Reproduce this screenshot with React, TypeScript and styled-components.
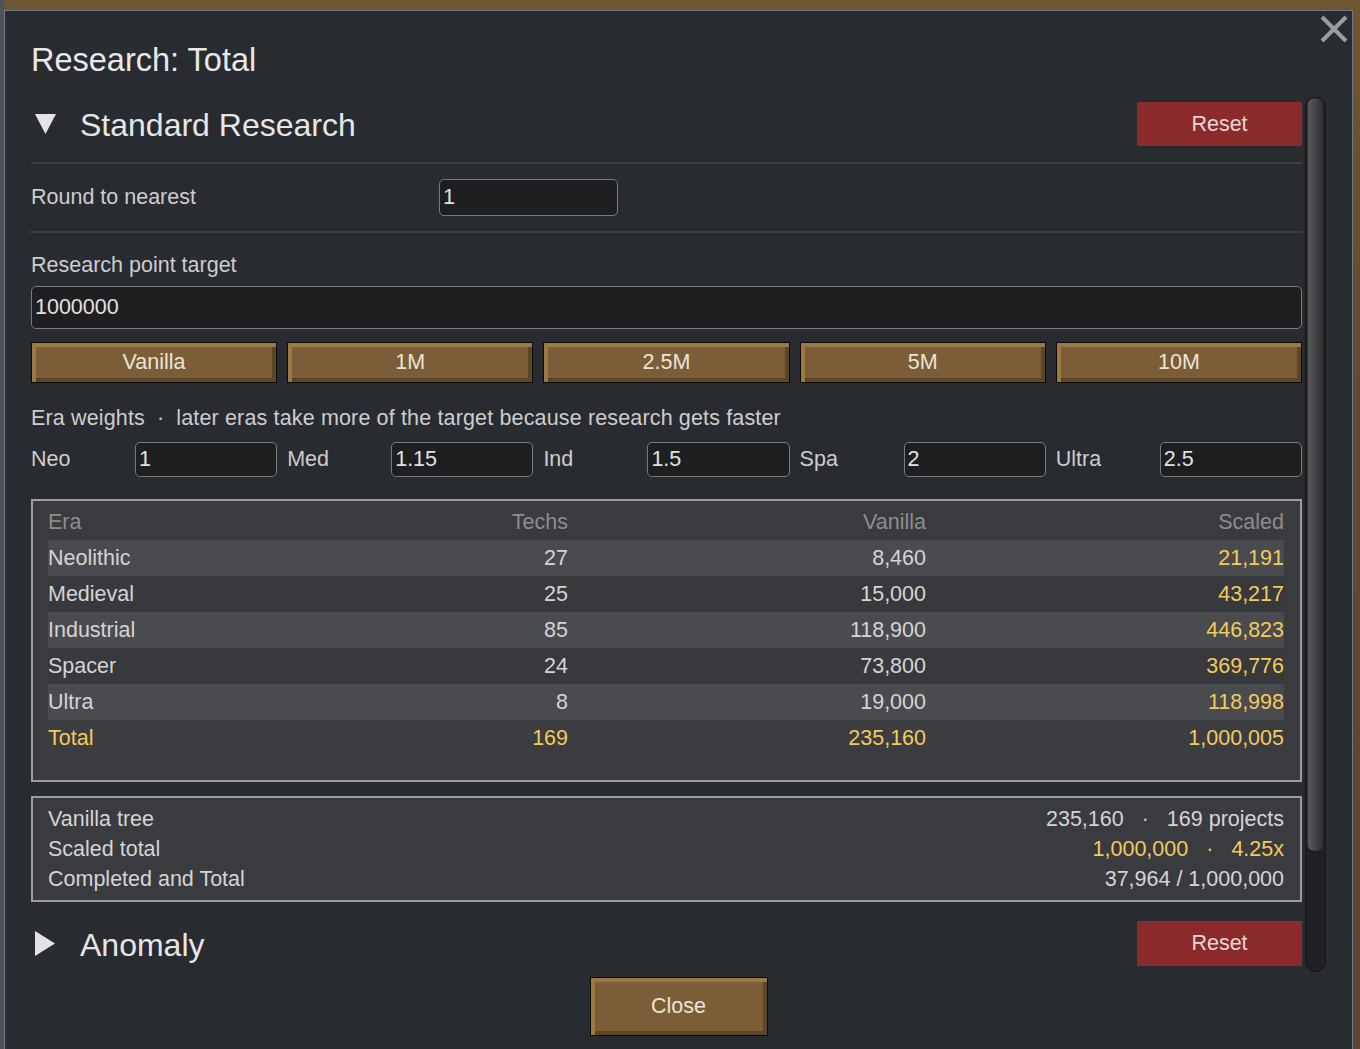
import styled, { createGlobalStyle } from "styled-components"

const GlobalStyle = createGlobalStyle`
  html, body {
    margin: 0;
    padding: 0;
    height: 100%;
    overflow: hidden;
  }
  body {
    font-family: "Liberation Sans", Arial, sans-serif;
    background:
      linear-gradient(90deg, #4e5158 0px, #4e5158 4px, transparent 4px),
      linear-gradient(180deg, #6e5634 0%, #5f4a32 40%, #5a4533 100%);
  }
`

const YELLOW = "#f2ca5c"

const eras = [
  { name: "Neolithic", techs: "27", vanilla: "8,460", scaled: "21,191" },
  { name: "Medieval", techs: "25", vanilla: "15,000", scaled: "43,217" },
  { name: "Industrial", techs: "85", vanilla: "118,900", scaled: "446,823" },
  { name: "Spacer", techs: "24", vanilla: "73,800", scaled: "369,776" },
  { name: "Ultra", techs: "8", vanilla: "19,000", scaled: "118,998" },
]

const weights = [
  { label: "Neo", value: "1" },
  { label: "Med", value: "1.15" },
  { label: "Ind", value: "1.5" },
  { label: "Spa", value: "2" },
  { label: "Ultra", value: "2.5" },
]

const presets = ["Vanilla", "1M", "2.5M", "5M", "10M"]

const DownTriangle = () => (
  <svg width="21" height="20" viewBox="0 0 21 20">
    <polygon points="0,0 21,0 10.5,20" fill="#e4e4e4" />
  </svg>
)

const RightTriangle = () => (
  <svg width="20" height="25" viewBox="0 0 20 25">
    <polygon points="0,0 20,12.5 0,25" fill="#e4e4e4" />
  </svg>
)

export default function App() {
  return (
    <>
      <GlobalStyle />
      <Page>
        <Dialog>
          <CloseX aria-label="close">
            <svg width="28" height="28" viewBox="0 0 28 28">
              <path d="M2 2 L26 26 M26 2 L2 26" stroke="#9a9c9f" strokeWidth="4" />
            </svg>
          </CloseX>
          <Title>Research: Total</Title>

          <ScrollArea>
            <Content>
              <SectionHead>
                <Toggle>
                  <DownTriangle />
                </Toggle>
                <SectionTitle>Standard Research</SectionTitle>
                <ResetButton>Reset</ResetButton>
              </SectionHead>

              <Divider $top={16} $bottom={15} />
              <RoundRow>
                <Label>Round to nearest</Label>
                <RoundInput defaultValue="1" />
              </RoundRow>
              <Divider $top={15} $bottom={0} />

              <FieldLabel $top={20}>Research point target</FieldLabel>
              <WideInput defaultValue="1000000" />

              <PresetRow>
                {presets.map((p) => (
                  <BrownButton key={p}>{p}</BrownButton>
                ))}
              </PresetRow>

              <FieldLabel $top={23} $spaced>
                Era weights<Dot $gap={12}>·</Dot>later eras take more of the target because research gets faster
              </FieldLabel>

              <WeightRow>
                {weights.map((w) => (
                  <WeightCell key={w.label}>
                    <WeightLabel>{w.label}</WeightLabel>
                    <WeightInput defaultValue={w.value} />
                  </WeightCell>
                ))}
              </WeightRow>

              <TableBox>
                <TableRow $kind="head">
                  <Cell>Era</Cell>
                  <Cell $right>Techs</Cell>
                  <Cell $right>Vanilla</Cell>
                  <Cell $right>Scaled</Cell>
                </TableRow>
                {eras.map((e, i) => (
                  <TableRow key={e.name} $kind={i % 2 === 0 ? "odd" : "even"}>
                    <Cell>{e.name}</Cell>
                    <Cell $right>{e.techs}</Cell>
                    <Cell $right>{e.vanilla}</Cell>
                    <Cell $right $gold>{e.scaled}</Cell>
                  </TableRow>
                ))}
                <TableRow $kind="total">
                  <Cell $gold>Total</Cell>
                  <Cell $right $gold>169</Cell>
                  <Cell $right $gold>235,160</Cell>
                  <Cell $right $gold>1,000,005</Cell>
                </TableRow>
              </TableBox>

              <SummaryBox>
                <SummaryRow>
                  <span>Vanilla tree</span>
                  <span>
                    235,160<Dot $gap={18}>·</Dot>169 projects
                  </span>
                </SummaryRow>
                <SummaryRow>
                  <span>Scaled total</span>
                  <Gold>
                    1,000,000<Dot $gap={18}>·</Dot>4.25x
                  </Gold>
                </SummaryRow>
                <SummaryRow>
                  <span>Completed and Total</span>
                  <span>37,964 / 1,000,000</span>
                </SummaryRow>
              </SummaryBox>

              <SectionHead $top={19} $height={45}>
                <Toggle>
                  <RightTriangle />
                </Toggle>
                <SectionTitle>Anomaly</SectionTitle>
                <ResetButton>Reset</ResetButton>
              </SectionHead>
            </Content>

            <ScrollTrack>
              <ScrollThumb />
            </ScrollTrack>
          </ScrollArea>

          <Footer>
            <BrownButton $wide>Close</BrownButton>
          </Footer>
        </Dialog>
      </Page>
    </>
  )
}

const Page = styled.div`
  padding: 10px 0 0 4px;
`
const Dialog = styled.div`
  position: relative;
  box-sizing: border-box;
  width: 1349px;
  height: 1060px;
  border: 1px solid #6e7a8a;
  background: #282b30;
  padding: 0 26px;
  display: flex;
  flex-direction: column;
  color: #d2d2d2;
`
const CloseX = styled.div`
  position: absolute;
  top: 4px;
  right: 4px;
  width: 28px;
  height: 28px;
`
const Title = styled.div`
  margin-top: 30px;
  font-size: 32.5px;
  line-height: 38px;
  color: #e8e8e8;
`
const ScrollArea = styled.div`
  margin-top: 18px;
  height: 875px;
  display: flex;
  gap: 3px;
`
const Content = styled.div`
  flex: 1;
  min-width: 0;
  padding-top: 5px;
  display: flex;
  flex-direction: column;
`
const SectionHead = styled.div<{ $top?: number; $height?: number }>`
  margin-top: ${(p) => p.$top ?? 0}px;
  height: ${(p) => p.$height ?? 44}px;
  display: flex;
  align-items: center;
`
const Toggle = styled.div`
  width: 49px;
  padding-left: 4px;
  box-sizing: border-box;
  display: flex;
  align-items: center;
`
const SectionTitle = styled.div`
  flex: 1;
  font-size: 32px;
  padding-top: 3px;
  color: #e6e6e6;
`
const ResetButton = styled.div`
  width: 165px;
  align-self: stretch;
  background: #8a2a2b;
  color: #e6d6d6;
  font-size: 21.5px;
  display: flex;
  align-items: center;
  justify-content: center;
`
const Divider = styled.div<{ $top: number; $bottom: number }>`
  height: 2px;
  background: #3b3e43;
  margin: ${(p) => p.$top}px 0 ${(p) => p.$bottom}px;
`
const RoundRow = styled.div`
  height: 37px;
  display: flex;
  align-items: center;
`
const Label = styled.div`
  width: 408px;
  font-size: 21.5px;
  color: #cdcdcd;
`
const inputBase = `
  box-sizing: border-box;
  background: #1e1f21;
  border: 1px solid #7b7b7b;
  border-radius: 5px;
  color: #e2e2e2;
  font-family: "Liberation Sans", Arial, sans-serif;
  font-size: 21.5px;
  padding: 0 0 0 3px;
  outline: none;
  min-width: 0;
`
const RoundInput = styled.input`
  ${inputBase}
  width: 179px;
  height: 37px;
`
const FieldLabel = styled.div<{ $top: number; $spaced?: boolean }>`
  margin-top: ${(p) => p.$top}px;
  font-size: 21.5px;
  line-height: 24px;
  letter-spacing: ${(p) => (p.$spaced ? "0.15px" : "0")};
  color: #cdcdcd;
`
const Dot = styled.span<{ $gap: number }>`
  margin: 0 ${(p) => p.$gap}px;
`
const WideInput = styled.input`
  ${inputBase}
  margin-top: 9px;
  width: 100%;
  height: 43px;
`
const PresetRow = styled.div`
  margin-top: 13px;
  display: grid;
  grid-template-columns: repeat(5, minmax(0, 1fr));
  gap: 10px;
  height: 41px;
`
const BrownButton = styled.div<{ $wide?: boolean }>`
  box-sizing: border-box;
  width: ${(p) => (p.$wide ? "178px" : "auto")};
  height: ${(p) => (p.$wide ? "59px" : "41px")};
  background: #7b5e37;
  border: 1px solid #0d0b07;
  box-shadow:
    inset 4px 4px 0 #9a7945,
    inset -4px -4px 0 #5c4528;
  color: #ece4d6;
  font-size: 21.5px;
  display: flex;
  align-items: center;
  justify-content: center;
`
const WeightRow = styled.div`
  margin-top: 12px;
  display: grid;
  grid-template-columns: repeat(5, minmax(0, 1fr));
  gap: 10px;
  height: 35px;
`
const WeightCell = styled.div`
  display: flex;
  align-items: center;
  min-width: 0;
`
const WeightLabel = styled.div`
  width: 104px;
  flex-shrink: 0;
  font-size: 21.5px;
  color: #cdcdcd;
`
const WeightInput = styled.input`
  ${inputBase}
  flex: 1;
  height: 35px;
`
const TableBox = styled.div`
  margin-top: 22px;
  border: 2px solid #9d9d9d;
  background: #3a3b3e;
  padding: 3px 16px 24px 15px;
`
const rowBg = {
  head: "transparent",
  odd: "#4a4b4e",
  even: "#38393c",
  total: "#3c3d40",
}
const TableRow = styled.div<{ $kind: keyof typeof rowBg }>`
  height: 36px;
  display: grid;
  grid-template-columns: minmax(0, 1fr) 358px 358px 358px;
  align-items: center;
  background: ${(p) => rowBg[p.$kind]};
  color: ${(p) => (p.$kind === "head" ? "#8d8d8d" : "#d4d4d4")};
  font-size: 21.5px;
`
const Cell = styled.div<{ $right?: boolean; $gold?: boolean }>`
  text-align: ${(p) => (p.$right ? "right" : "left")};
  color: ${(p) => (p.$gold ? YELLOW : "inherit")};
`
const SummaryBox = styled.div`
  margin-top: 14px;
  border: 2px solid #9d9d9d;
  background: #3a3b3e;
  padding: 6px 16px 6px 15px;
`
const SummaryRow = styled.div`
  height: 30px;
  display: flex;
  align-items: center;
  justify-content: space-between;
  font-size: 21.5px;
  color: #d4d4d4;
`
const Gold = styled.span`
  color: ${YELLOW};
`
const ScrollTrack = styled.div`
  width: 21px;
  height: 875px;
  flex-shrink: 0;
  box-sizing: border-box;
  border: 1px solid #141517;
  border-radius: 10px;
  background: #1f2022;
  overflow: hidden;
`
const ScrollThumb = styled.div`
  height: 753px;
  border-radius: 10px;
  background: linear-gradient(90deg, #1b1b1c 0%, #5a5b5d 18%, #444547 45%, #333436 80%, #1b1b1c 100%);
`
const Footer = styled.div`
  margin-top: 5px;
  display: flex;
  justify-content: center;
`
